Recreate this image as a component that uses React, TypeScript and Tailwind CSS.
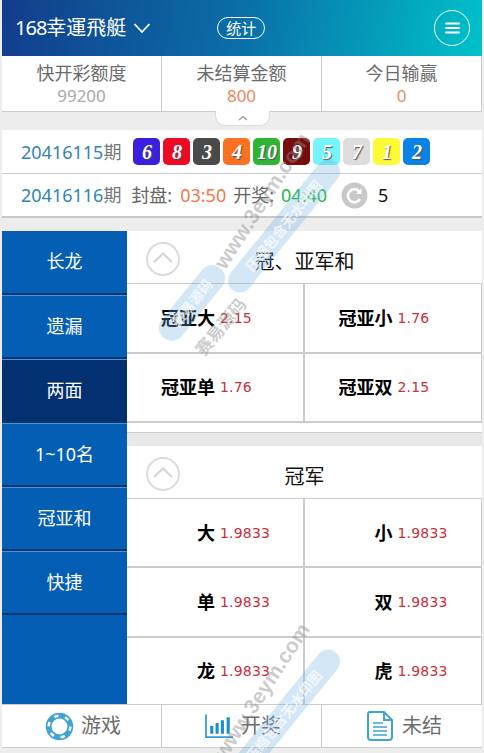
const FONT = "font-['Noto_Sans','Noto_Sans_CJK_SC',sans-serif]";

const balls = [
  ["6", "bg-[#3a1fe0]"],
  ["8", "bg-[#ee0a22]"],
  ["3", "bg-[#4a4a4a]"],
  ["4", "bg-[#fb7121]"],
  ["10", "bg-[#2fb433]"],
  ["9", "bg-[#760c0c]"],
  ["5", "bg-[#74f4fb]"],
  ["7", "bg-[#dddddd]"],
  ["1", "bg-[#fdfb36]"],
  ["2", "bg-[#0b83e6]"],
];

const menu = ["长龙", "遗漏", "两面", "1~10名", "冠亚和", "快捷"];

function Cell({ name, odds }: { name: string; odds: string }) {
  return (
    <div className="flex items-center border-r-2 border-b-2 border-[#cccccc] bg-white even:border-r">
      <span className="w-[88px] text-right text-[18px] font-bold leading-none text-black">{name}</span>
      <span className="ml-[5px] font-['DejaVu_Sans',sans-serif] text-[14px] leading-none tracking-[0.2px] text-[#c9303c]">{odds}</span>
    </div>
  );
}

function SectionHead({ title }: { title: string }) {
  return (
    <div className="relative flex h-[53px] shrink-0 items-center justify-center border-b border-[#cccccc] bg-white pt-[10px] text-[20px] leading-none text-[#111111]">
      <svg className="absolute left-[18px] top-[10px]" width="36" height="36" viewBox="0 0 36 36" fill="none">
        <circle cx="18" cy="18" r="16" stroke="#dcdcdc" strokeWidth="2" />
        <path d="M9 21l9-8.5L27 21" stroke="#d4d4d4" strokeWidth="2" />
      </svg>
      {title}
    </div>
  );
}

function Watermark({ className }: { className: string }) {
  return (
    <div className={`pointer-events-none absolute left-0 h-0 w-full ${className}`}>
      <div className="absolute left-[182px] top-[188px] h-[26px] w-[160px] -rotate-[57deg] text-center font-['Liberation_Sans',sans-serif] text-[21px] leading-[26px] font-bold whitespace-nowrap text-[#8c8c8c]/45">
        www.3eym.com
      </div>
      <div className="absolute left-[147px] top-[290px] h-[26px] w-[90px] -rotate-[51deg] rounded-full bg-[#6fb0e6]/30 text-center text-[14px] leading-[26px] font-bold whitespace-nowrap text-white/70">
        赛易源码
      </div>
      <div className="absolute left-[202px] top-[214px] h-[24px] w-[164px] -rotate-[51deg] rounded-full bg-[#6fb0e6]/30 text-center text-[14px] leading-[24px] font-bold whitespace-nowrap text-white/70">
        压缩包含无水印图
      </div>
      <div className="absolute left-[183px] top-[316px] h-[22px] w-[76px] -rotate-[50deg] text-center text-[17px] leading-[22px] font-bold whitespace-nowrap text-[#8c8c8c]/45">
        赛易源码
      </div>
    </div>
  );
}

export default function App() {
  return (
    <div className={`${FONT} relative h-[753px] w-[484px] overflow-hidden bg-[#ededed]`}>
      <div className="mx-[2px] flex h-[748px] w-[480px] flex-col">
        {/* header */}
        <div className="relative flex h-[56px] shrink-0 items-center bg-[linear-gradient(100deg,#123d8c_0%,#0a6fa8_50%,#00c2c9_100%)] pl-[13px] text-white">
          <span className="text-[20px] leading-none">
            <span className="tracking-[-1px]">168</span>幸運飛艇
          </span>
          <svg className="ml-[7px]" width="18" height="12" viewBox="0 0 18 12" fill="none">
            <path d="M1.5 2l7.5 8 7.5-8" stroke="white" strokeWidth="1.8" />
          </svg>
          <span className="ml-[66px] flex h-[22px] w-[48px] items-center justify-center rounded-full border border-white text-[15px] leading-none">
            统计
          </span>
          <span className="absolute right-[12px] top-[10px] flex h-[36px] w-[36px] items-center justify-center rounded-full border border-white">
            <svg width="15" height="12" viewBox="0 0 15 12" fill="none">
              <path d="M1 1.5h13M1 6h13M1 10.5h13" stroke="white" strokeWidth="1.9" strokeLinecap="round" />
            </svg>
          </span>
        </div>

        {/* stats */}
        <div className="relative grid h-[56px] shrink-0 grid-cols-3 border-b border-[#cccccc] bg-white text-center leading-none">
          {[
            ["快开彩额度", "99200", "text-[#a8a8a8]"],
            ["未结算金额", "800", "text-[#f0875c]"],
            ["今日输赢", "0", "text-[#f0875c]"],
          ].map(([label, value, color]) => (
            <div key={label} className="flex flex-col items-center border-r border-[#cccccc] pt-[8px] last:border-r-0">
              <span className="text-[18px] text-[#6b6b6b]">{label}</span>
              <span className={`mt-[5px] text-[17px] ${color}`}>{value}</span>
            </div>
          ))}
          <div className="absolute left-[213px] top-[55px] flex h-[15px] w-[55px] items-center justify-center rounded-b-[10px] border border-t-0 border-[#dddddd] bg-white">
            <svg width="10" height="6" viewBox="0 0 10 6" fill="none">
              <path d="M1 5l4-3.5L9 5" stroke="#9a9a9a" strokeWidth="1.2" />
            </svg>
          </div>
        </div>

        <div className="h-[18px] shrink-0" />

        {/* draw rows */}
        <div className="flex h-[44px] shrink-0 items-center border-b border-[#cccccc] bg-white pl-[19px] text-[18px] leading-none">
          <span className="text-[#3383b5]">20416115</span>
          <span className="text-[#777777]">期</span>
          <div className="ml-[12px] flex gap-[3px]">
            {balls.map(([n, bg]) => (
              <span
                key={n}
                className={`flex h-[27px] w-[27px] items-center justify-center rounded-[5px] font-['Liberation_Serif',serif] text-[20px] font-bold italic text-white [text-shadow:1px_1px_1px_#555] ${bg}`}
              >
                {n}
              </span>
            ))}
          </div>
        </div>
        <div className="flex h-[44px] shrink-0 items-center border-b-2 border-[#c8c8c8] bg-white pl-[19px] text-[18px] leading-none">
          <span className="text-[#3383b5]">20416116</span>
          <span className="text-[#777777]">期</span>
          <span className="ml-[10px] text-[#666666]">封盘:</span>
          <span className="ml-[8px] text-[#f0784c]">03:50</span>
          <span className="ml-[7px] text-[#666666]">开奖:</span>
          <span className="ml-[7px] text-[#26b544]">04:40</span>
          <svg className="ml-[14px]" width="27" height="27" viewBox="0 0 27 27" fill="none">
            <circle cx="13.5" cy="13.5" r="13" fill="#c9c9c9" />
            <path d="M19 17a6.5 6.5 0 1 1-.6-7.4" stroke="white" strokeWidth="2.6" />
            <path d="M20.5 6.5v5.5h-5.5z" fill="white" />
          </svg>
          <span className="ml-[10px] text-[18px] text-[#111111]">5</span>
        </div>

        <div className="h-[13px] shrink-0" />

        {/* main */}
        <div className="flex min-h-0 flex-1">
          <div className="flex w-[125px] shrink-0 flex-col bg-[#045eb4]">
            {menu.map((m) => (
              <div
                key={m}
                className={`flex h-[64px] items-center justify-center border-t border-b-2 border-t-[#4b93d6] border-b-[#03366f] pb-[2px] text-[18px] leading-none text-white first:border-t-0 ${
                  m === "两面" ? "bg-[#033070]" : ""
                }`}
              >
                {m}
              </div>
            ))}
          </div>

          <div className="min-w-0 flex-1 overflow-hidden bg-white">
            <SectionHead title="冠、亚军和" />
            <div className="grid h-[139px] grid-cols-2 grid-rows-2">
              <Cell name="冠亚大" odds="2.15" />
              <Cell name="冠亚小" odds="1.76" />
              <Cell name="冠亚单" odds="1.76" />
              <Cell name="冠亚双" odds="2.15" />
            </div>
            <div className="h-[10px] border-b border-[#cccccc] bg-white" />
            <div className="h-[13px] bg-[#e8e8e8]" />
            <SectionHead title="冠军" />
            <div className="grid h-[208px] grid-cols-2 grid-rows-3">
              <Cell name="大" odds="1.9833" />
              <Cell name="小" odds="1.9833" />
              <Cell name="单" odds="1.9833" />
              <Cell name="双" odds="1.9833" />
              <Cell name="龙" odds="1.9833" />
              <Cell name="虎" odds="1.9833" />
            </div>
          </div>
        </div>

        {/* bottom nav */}
        <div className="grid h-[44px] shrink-0 grid-cols-3 border-t border-b border-[#cccccc] bg-white text-[20px] leading-none text-[#6e6e6e]">
          <div className="flex items-center justify-center gap-[7px] border-r border-[#cccccc] pl-[3px]">
            <svg width="29" height="29" viewBox="0 0 30 30" fill="none">
              <circle cx="15" cy="15" r="11.2" stroke="#3fa3d4" strokeWidth="6" />
              <circle cx="15" cy="15" r="11.2" stroke="white" strokeWidth="2.6" strokeDasharray="4.5 7.2" />
            </svg>
            游戏
          </div>
          <div className="flex items-center justify-center gap-[7px] border-r border-[#cccccc] pl-[3px]">
            <svg width="29" height="26" viewBox="0 0 30 26" fill="none">
              <path d="M1 1v23.5h28" stroke="#2f9ed6" strokeWidth="1.8" />
              <path d="M7 13v8M12.5 10v11M18 7v14M24 4v17" stroke="#1f8dcb" strokeWidth="3.2" />
            </svg>
            开奖
          </div>
          <div className="flex items-center justify-center gap-[9px] pl-[5px]">
            <svg width="26" height="30" viewBox="0 0 26 30" fill="none">
              <path d="M3 1h14l8 8v17a3 3 0 0 1-3 3H4a3 3 0 0 1-3-3V3a2 2 0 0 1 2-2z" stroke="#3fa3d4" strokeWidth="2" />
              <path d="M17 1v8h8" stroke="#3fa3d4" strokeWidth="2" />
              <path d="M6 12h10M6 16h14M6 20h14M6 24h14" stroke="#3fa3d4" strokeWidth="1.6" />
            </svg>
            未结
          </div>
        </div>
      </div>

      <Watermark className="top-0" />
      <Watermark className="top-[490px]" />
    </div>
  );
}
